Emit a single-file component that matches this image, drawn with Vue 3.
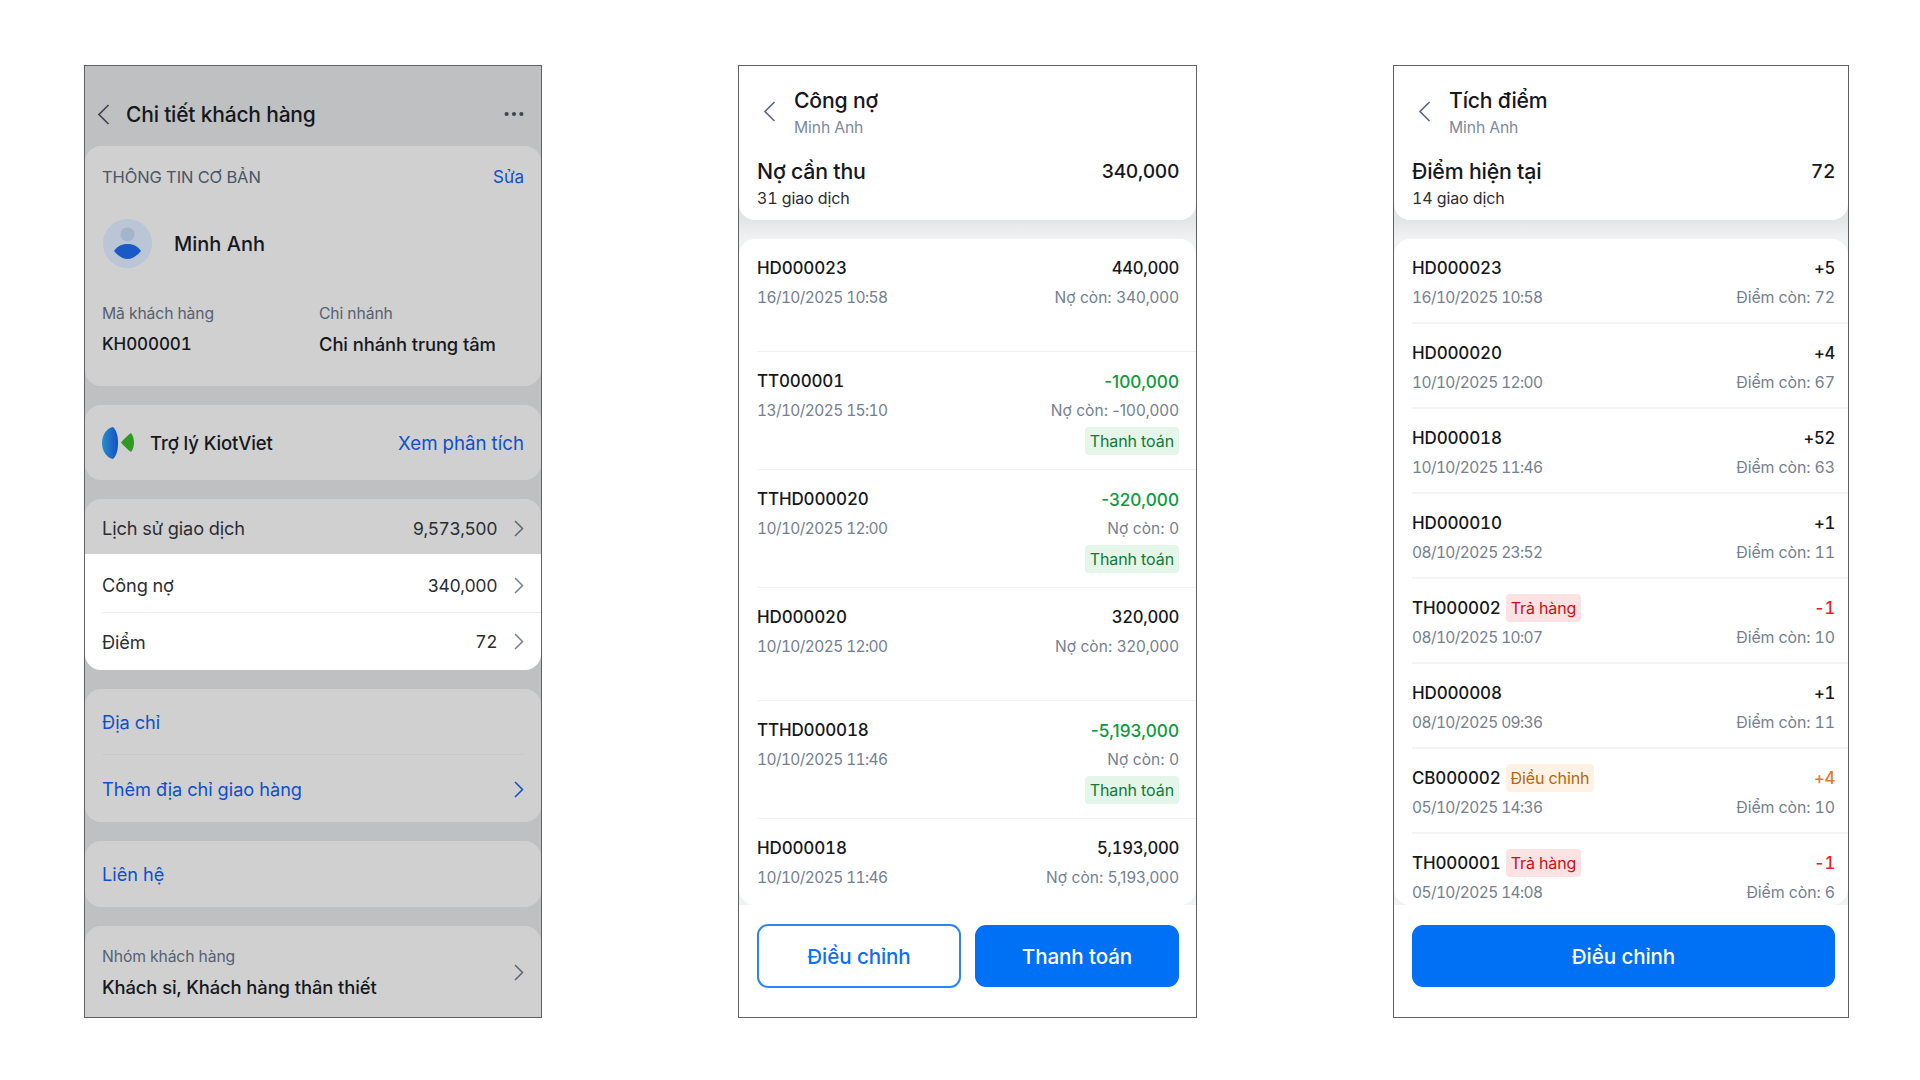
<script setup>
const debts = [
  { code: 'HD000023', amount: '440,000', date: '16/10/2025 10:58', left: 'Nợ còn: 340,000' },
  { code: 'TT000001', amount: '-100,000', date: '13/10/2025 15:10', left: 'Nợ còn: -100,000', paid: true },
  { code: 'TTHD000020', amount: '-320,000', date: '10/10/2025 12:00', left: 'Nợ còn: 0', paid: true },
  { code: 'HD000020', amount: '320,000', date: '10/10/2025 12:00', left: 'Nợ còn: 320,000' },
  { code: 'TTHD000018', amount: '-5,193,000', date: '10/10/2025 11:46', left: 'Nợ còn: 0', paid: true },
  { code: 'HD000018', amount: '5,193,000', date: '10/10/2025 11:46', left: 'Nợ còn: 5,193,000' }
]
const points = [
  { code: 'HD000023', val: '+5', date: '16/10/2025 10:58', left: 'Điểm còn: 72' },
  { code: 'HD000020', val: '+4', date: '10/10/2025 12:00', left: 'Điểm còn: 67' },
  { code: 'HD000018', val: '+52', date: '10/10/2025 11:46', left: 'Điểm còn: 63' },
  { code: 'HD000010', val: '+1', date: '08/10/2025 23:52', left: 'Điểm còn: 11' },
  { code: 'TH000002', tag: 'Trả hàng', kind: 'red', val: '-1', date: '08/10/2025 10:07', left: 'Điểm còn: 10' },
  { code: 'HD000008', val: '+1', date: '08/10/2025 09:36', left: 'Điểm còn: 11' },
  { code: 'CB000002', tag: 'Điều chỉnh', kind: 'orange', val: '+4', date: '05/10/2025 14:36', left: 'Điểm còn: 10' },
  { code: 'TH000001', tag: 'Trả hàng', kind: 'red', val: '-1', date: '05/10/2025 14:08', left: 'Điểm còn: 6' }
]
</script>

<template>
  <div class="page">
    <!-- Customer detail -->
    <section class="phone dim">
      <header class="nav">
        <svg class="back" width="13" height="21" viewBox="0 0 13 21"><path d="M11.5 1 2 10.5 11.5 20" fill="none" stroke="#3f4650" stroke-width="1.7"/></svg>
        <h1 class="nav-title">Chi tiết khách hàng</h1>
        <svg class="dots" width="20" height="6" viewBox="0 0 20 6"><circle cx="2.6" cy="3" r="2.1"/><circle cx="10" cy="3" r="2.1"/><circle cx="17.4" cy="3" r="2.1"/></svg>
      </header>

      <div class="card basic">
        <div class="basic-head">
          <span class="caps">THÔNG TIN CƠ BẢN</span>
          <span class="link small">Sửa</span>
        </div>
        <div class="person">
          <svg width="49" height="49" viewBox="0 0 49 49">
            <circle cx="24.5" cy="24.5" r="24.5" fill="#bac5d6"/>
            <circle cx="24.5" cy="15.5" r="7" fill="#a3b4cd"/>
            <path d="M11 32C15 26 20 25 24.5 25 29 25 34 26 38 32 34 37 29 40 24.5 40 20 40 15 37 11 32Z" fill="#1b5ac6"/>
          </svg>
          <span class="person-name">Minh Anh</span>
        </div>
        <div class="facts">
          <div class="fact">
            <span class="muted">Mã khách hàng</span>
            <span class="fact-value fact-code">KH000001</span>
          </div>
          <div class="fact">
            <span class="muted">Chi nhánh</span>
            <span class="fact-value">Chi nhánh trung tâm</span>
          </div>
        </div>
      </div>

      <div class="card assistant">
        <svg width="32" height="32" viewBox="0 0 32 32">
          <defs>
            <linearGradient id="lens" x1="0" x2="1" y1="0" y2="0">
              <stop offset="0" stop-color="#2a8fc9"/>
              <stop offset="1" stop-color="#1150c4"/>
            </linearGradient>
          </defs>
          <path d="M11 0C4 1 0 9 0 16 0 23 4 31 11 32 15 28 16 22 16 16 16 10 15 4 11 0Z" fill="url(#lens)"/>
          <path d="M29 6C26 8 22 12 19 15.5 22 19 26 23 29 25 33 20 33 11 29 6Z" fill="#2f9a22"/>
        </svg>
        <span class="assistant-name">Trợ lý KiotViet</span>
        <span class="link assistant-link">Xem phân tích</span>
      </div>

      <div class="card stats">
        <div class="stat first">
          <span class="stat-label">Lịch sử giao dịch</span>
          <span class="stat-value">9,573,500</span>
          <svg class="chev" width="10" height="17" viewBox="0 0 10 17"><path d="M1 1l7.5 7.5L1 16" fill="none" stroke="#5e6672" stroke-width="1.5"/></svg>
        </div>
        <div class="bright">
          <div class="stat ruled">
            <span class="stat-label">Công nợ</span>
            <span class="stat-value">340,000</span>
            <svg class="chev" width="10" height="17" viewBox="0 0 10 17"><path d="M1 1l7.5 7.5L1 16" fill="none" stroke="#79818c" stroke-width="1.5"/></svg>
          </div>
          <div class="stat">
            <span class="stat-label">Điểm</span>
            <span class="stat-value">72</span>
            <svg class="chev" width="10" height="17" viewBox="0 0 10 17"><path d="M1 1l7.5 7.5L1 16" fill="none" stroke="#79818c" stroke-width="1.5"/></svg>
          </div>
        </div>
      </div>

      <div class="card address">
        <div class="addr-row ruled-dim"><span class="link">Địa chỉ</span></div>
        <div class="addr-row">
          <span class="link">Thêm địa chỉ giao hàng</span>
          <svg class="chev" width="10" height="17" viewBox="0 0 10 17"><path d="M1 1l7.5 7.5L1 16" fill="none" stroke="#0f4fc9" stroke-width="1.5"/></svg>
        </div>
      </div>

      <div class="card contact"><span class="link">Liên hệ</span></div>

      <div class="card group">
        <div class="fact">
          <span class="muted">Nhóm khách hàng</span>
          <span class="fact-value">Khách sỉ, Khách hàng thân thiết</span>
        </div>
        <svg class="chev" width="10" height="17" viewBox="0 0 10 17"><path d="M1 1l7.5 7.5L1 16" fill="none" stroke="#5e6672" stroke-width="1.5"/></svg>
      </div>
    </section>

    <!-- Debts -->
    <section class="phone sheet">
      <div class="summary">
        <header class="sub-nav">
          <svg class="back-sub" width="13" height="21" viewBox="0 0 13 21"><path d="M11.5 1 2 10.5 11.5 20" fill="none" stroke="#5c6b80" stroke-width="1.7"/></svg>
          <div class="sub-titles">
            <h1 class="sub-title">Công nợ</h1>
            <span class="sub-name">Minh Anh</span>
          </div>
        </header>
        <div class="sum-row">
          <span>Nợ cần thu</span>
          <span class="sum-value">340,000</span>
        </div>
        <div class="sum-count">31 giao dịch</div>
      </div>
      <div class="list">
        <div v-for="d in debts" :key="d.code" class="debt">
          <div class="line-top">
            <span class="code">{{ d.code }}</span>
            <span class="amount" :class="{ green: d.paid }">{{ d.amount }}</span>
          </div>
          <div class="line-sub">
            <span class="date">{{ d.date }}</span>
            <span class="left">{{ d.left }}</span>
          </div>
          <div v-if="d.paid" class="line-tag"><span class="tag tag-green">Thanh toán</span></div>
        </div>
      </div>
      <footer class="foot">
        <button class="btn btn-line">Điều chỉnh</button>
        <button class="btn btn-fill">Thanh toán</button>
      </footer>
    </section>

    <!-- Points -->
    <section class="phone sheet phone-narrow">
      <div class="summary">
        <header class="sub-nav">
          <svg class="back-sub" width="13" height="21" viewBox="0 0 13 21"><path d="M11.5 1 2 10.5 11.5 20" fill="none" stroke="#5c6b80" stroke-width="1.7"/></svg>
          <div class="sub-titles">
            <h1 class="sub-title">Tích điểm</h1>
            <span class="sub-name">Minh Anh</span>
          </div>
        </header>
        <div class="sum-row">
          <span>Điểm hiện tại</span>
          <span class="sum-value">72</span>
        </div>
        <div class="sum-count">14 giao dịch</div>
      </div>
      <div class="list">
        <div v-for="p in points" :key="p.code" class="point">
          <div class="line-top">
            <span class="code-wrap">
              <span class="code">{{ p.code }}</span>
              <span v-if="p.tag" class="tag" :class="'tag-' + p.kind">{{ p.tag }}</span>
            </span>
            <span class="amount" :class="p.kind">{{ p.val }}</span>
          </div>
          <div class="line-sub">
            <span class="date">{{ p.date }}</span>
            <span class="remain">{{ p.left }}</span>
          </div>
        </div>
      </div>
      <footer class="foot foot-wide">
        <button class="btn btn-fill">Điều chỉnh</button>
      </footer>
    </section>
  </div>
</template>

<style scoped>
.page {
  display: flex;
  gap: 196px;
  width: 1920px;
  height: 1080px;
  box-sizing: border-box;
  padding: 65px 0 0 84px;
  background: #fff;
  font-family: Inter, "Noto Sans", sans-serif;
  font-variant-numeric: tabular-nums;
  color: #15181c;
}
.phone {
  display: flex;
  flex-direction: column;
  width: 459px;
  height: 953px;
  box-sizing: border-box;
  border: 1px solid #5f6164;
  overflow: hidden;
}
.sheet { background: linear-gradient(#e4e5e7 154px, #f1f2f3 173px); }
.phone-narrow { width: 456px; }
.dim { width: 458px; background: #bfc0c2; gap: 19px; }

/* customer detail */
.nav {
  display: flex;
  align-items: center;
  height: 80px;
  flex: none;
  margin-bottom: -19px;
  padding: 16px 17px 0 12px;
  box-sizing: border-box;
}
.back { margin-right: 16px; }
.nav-title { margin: 0; font-size: 21px; font-weight: 500; letter-spacing: -0.2px; flex: 1; }
.dots { fill: #3d4550; }
.card {
  flex: none;
  background: #d0d0d0;
  border-radius: 16px;
  padding: 0 17px;
}
.basic { height: 240px; display: flex; flex-direction: column; }
.basic-head { display: flex; justify-content: space-between; align-items: center; padding-top: 21px; }
.caps { font-size: 16.5px; color: #4a5566; letter-spacing: -0.1px; }
.link { color: #0f4fc9; font-size: 18.2px; }
.link.small { font-size: 17px; }
.person { display: flex; align-items: center; gap: 22px; margin: 32px 0 0 1px; }
.person-name { font-size: 20px; font-weight: 500; }
.facts { display: grid; grid-template-columns: 217px 1fr; margin-top: 36px; }
.fact { display: flex; flex-direction: column; gap: 11px; }
.muted { font-size: 15.7px; color: #566070; letter-spacing: -0.1px; }
.fact-value { font-size: 18.4px; font-weight: 500; letter-spacing: -0.1px; line-height: 20px; }
.fact-code { font-size: 17px; }
.assistant { display: flex; align-items: center; height: 75px; }
.assistant-name { margin-left: 16px; font-size: 18.5px; font-weight: 500; letter-spacing: -0.1px; flex: 1; }
.assistant-link { font-size: 18.7px; padding-top: 1px; }
.stats { padding: 0; height: 171px; overflow: hidden; }
.stat {
  display: flex;
  align-items: center;
  height: 57px;
  margin-left: 17px;
  padding-right: 17px;
  box-sizing: border-box;
}
.stat.first { height: 55px; padding-top: 3px; }
.bright { background: #fff; height: 116px; }
.ruled { border-bottom: 1px solid #eceef0; height: 59px; padding-top: 4px; }
.stat-label { flex: 1; font-size: 18.2px; color: #2a2e33; letter-spacing: -0.1px; }
.stat-value { font-size: 17.5px; margin-right: 17px; color: #2a2e33; letter-spacing: -0.5px; }
.address { height: 133px; }
.addr-row { display: flex; align-items: center; justify-content: space-between; height: 66px; box-sizing: border-box; }
.addr-row + .addr-row { padding-top: 2px; }
.ruled-dim { border-bottom: 1px solid #c8c9ca; }
.contact { display: flex; align-items: center; height: 66px; }
.group { display: flex; align-items: center; justify-content: space-between; height: 92px; box-sizing: border-box; border-radius: 16px 16px 0 0; }

/* summaries */
.summary {
  flex: none;
  height: 154px;
  box-sizing: border-box;
  background: #fff;
  border-radius: 0 0 16px 16px;
  padding: 0 17px 0 18px;
}
.phone-narrow .summary { padding-right: 13px; }
.sub-nav { display: flex; align-items: flex-start; padding-top: 21px; height: 73px; box-sizing: border-box; }
.back-sub { margin: 14px 18px 0 6px; }
.sub-titles { display: flex; flex-direction: column; gap: 5px; }
.sub-title { margin: 0; font-size: 21.2px; font-weight: 500; letter-spacing: -0.2px; line-height: 26px; }
.sub-name { font-size: 15.7px; color: #7c8aa0; letter-spacing: -0.1px; }
.sum-row { display: flex; justify-content: space-between; align-items: center; font-size: 21.3px; font-weight: 500; letter-spacing: -0.2px; line-height: 26px; margin-top: 19px; }
.sum-value { font-size: 19.3px; letter-spacing: -0.4px; }
.sum-count { font-size: 16px; margin-top: 4px; color: #2a2e33; letter-spacing: -0.1px; }

/* lists */
.list {
  flex: 1;
  min-height: 0;
  margin-top: 19px;
  background: #fff;
  border-radius: 16px;
  overflow: hidden;
}
.debt {
  min-height: 113px;
  margin-left: 18px;
  padding: 17px 17px 0 0;
  border-bottom: 1px solid #f0f1f2;
  box-sizing: border-box;
}
.debt:has(.line-tag) { min-height: 118px; }
.point {
  height: 85px;
  margin-left: 18px;
  padding: 17px 13px 0 0;
  border-bottom: 2px solid #f3f4f5;
  box-sizing: border-box;
}
.line-top { display: flex; justify-content: space-between; align-items: center; height: 24px; font-size: 17px; font-weight: 500; letter-spacing: -0.15px; }
.amount { font-size: 16.7px; letter-spacing: -0.3px; }
.code-wrap { display: flex; align-items: center; gap: 5px; }
.line-sub { display: flex; justify-content: space-between; font-size: 15.5px; color: #748091; letter-spacing: -0.1px; margin-top: 8px; line-height: 20px; }
.date { letter-spacing: -0.6px; }
.left { font-variant-numeric: normal; letter-spacing: 0.05px; }
.remain { font-size: 15.9px; }
.line-tag { display: flex; justify-content: flex-end; margin-top: 6px; }
.amount.green { color: #0d9a3c; font-variant-numeric: normal; font-size: 17.2px; letter-spacing: 0; }
.amount.red { color: #ef1d25; }
.amount.orange { color: #e8781b; }
.tag { font-size: 16px; font-weight: 400; line-height: 28px; padding: 0 5px; border-radius: 4px; letter-spacing: -0.1px; }
.tag-green { background: #e3f6e9; color: #117a36; }
.tag-red { background: #fde2e4; color: #cc0e13; }
.tag-orange { background: #fff1e3; color: #b4650f; }

/* footer */
.foot {
  flex: none;
  height: 112px;
  box-sizing: border-box;
  background: #fff;
  padding: 20px 17px 0 18px;
  display: grid;
  grid-auto-flow: column;
  grid-auto-columns: 1fr;
  column-gap: 14px;
  align-items: start;
}
.foot-wide { padding-right: 13px; }
.btn {
  height: 62px;
  padding: 0;
  border-radius: 11px;
  font-family: inherit;
  font-size: 20.6px;
  font-weight: 500;
  box-sizing: border-box;
  letter-spacing: -0.1px;
}
.btn-line { background: #fff; border: 2px solid #2b86f5; color: #0b70f2; height: 64px; margin-top: -1px; }
.btn-fill { background: #0070f5; border: none; color: #fff; }
</style>
